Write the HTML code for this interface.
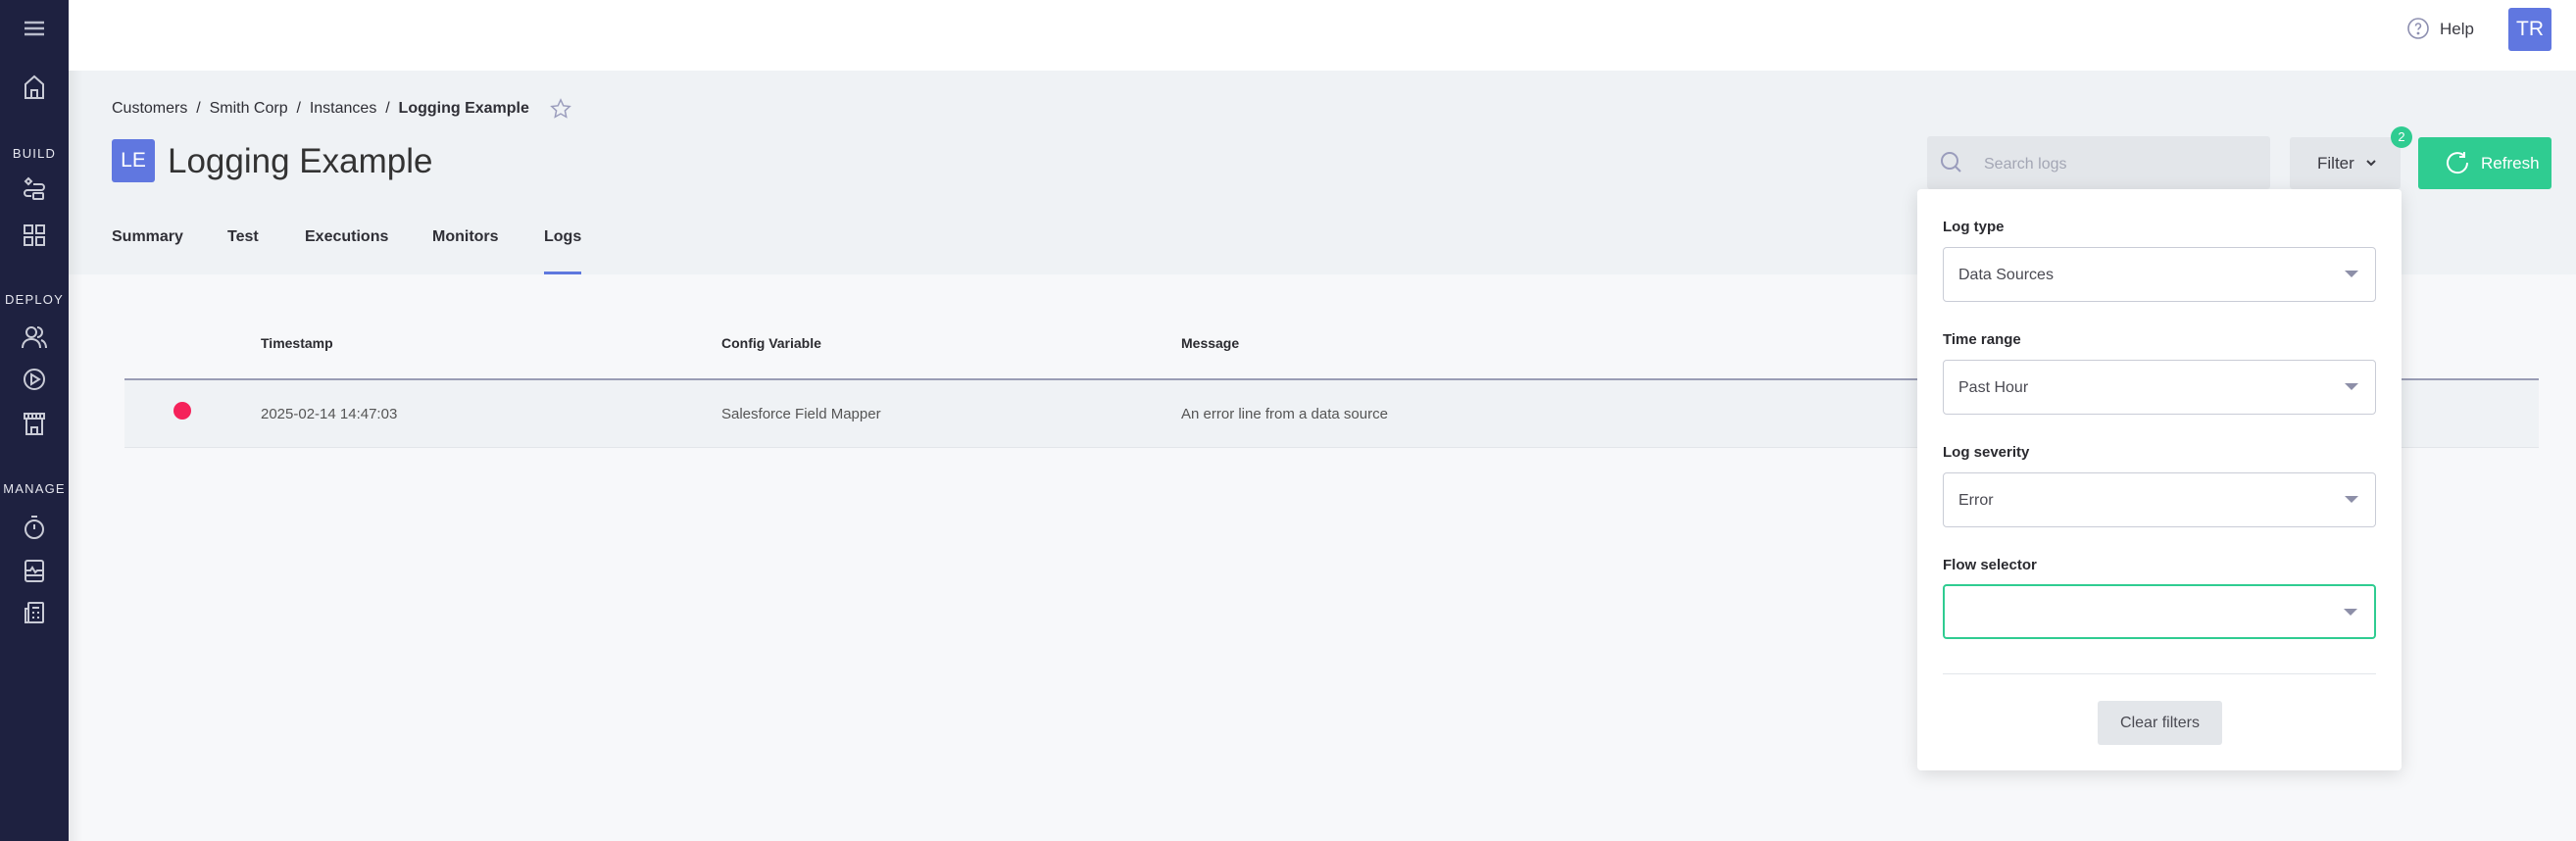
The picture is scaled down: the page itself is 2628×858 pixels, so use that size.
<!DOCTYPE html>
<html><head><meta charset="utf-8"><style>
*{box-sizing:border-box;margin:0;padding:0}
body{width:2628px;height:858px;overflow:hidden;font-family:"Liberation Sans",sans-serif;background:#f7f8fa;position:relative;color:#2f2f36}
.abs{position:absolute}
#side{left:0;top:0;width:70px;height:858px;background:#1e2140}
.sl{position:absolute;left:0;width:70px;text-align:center;color:#e6e7ef;font-size:13px;letter-spacing:1.2px}
.ic{position:absolute;left:20px;width:30px;height:30px}
#hdr{left:70px;top:0;width:2558px;height:72px;background:#fff}
#top{left:70px;top:72px;width:2558px;height:208px;background:#eff2f5}
.sh{left:70px;top:72px;width:14px;height:786px;background:linear-gradient(90deg,rgba(0,0,0,.06),rgba(0,0,0,0))}
.t{position:absolute;white-space:nowrap}
.sel{position:absolute;left:26px;width:442px;height:56px;border:1px solid #c9ccd6;border-radius:4px;font-size:16px;color:#4a4a52;padding:19px 15px}
.sel:after{content:"";position:absolute;right:17px;top:23px;border-left:7px solid transparent;border-right:7px solid transparent;border-top:7px solid #8d8fa8}
.lab{position:absolute;left:26px;font-size:15px;font-weight:bold;color:#2b2b30}
</style></head><body>
<div id="side" class="abs">
 <svg class="ic" style="top:14px" viewBox="0 0 30 30"><path d="M5 9h20M5 15h20M5 21h20" stroke="#b9bccb" stroke-width="2.4"/></svg>
 <svg class="ic" style="top:74px" viewBox="0 0 30 30" fill="none" stroke="#c9cbd6" stroke-width="2"><path d="M6 26V12l9-8 9 8v14zM12 26v-8h6v8"/></svg>
 <div class="sl" style="top:149px">BUILD</div>
 <svg class="ic" style="top:178px" viewBox="0 0 30 30" fill="none" stroke="#c9cbd6" stroke-width="2"><path d="M9 4l3 3-3 3-3-3zM14 10h8a3 3 0 010 6H8a3 3 0 000 6h4"/><rect x="14" y="19" width="10" height="6" rx="1"/></svg>
 <svg class="ic" style="top:225px" viewBox="0 0 30 30" fill="none" stroke="#c9cbd6" stroke-width="2"><rect x="5" y="5" width="8" height="8"/><rect x="17" y="5" width="8" height="8"/><rect x="5" y="17" width="8" height="8"/><rect x="17" y="17" width="8" height="8"/></svg>
 <div class="sl" style="top:298px">DEPLOY</div>
 <svg class="ic" style="top:329px" viewBox="0 0 30 30" fill="none" stroke="#c9cbd6" stroke-width="2"><circle cx="12" cy="10" r="5"/><path d="M3 26c0-6 4-9 9-9s9 3 9 9M18 5a5 5 0 010 10M22 18c3 1 5 4 5 8"/></svg>
 <svg class="ic" style="top:372px" viewBox="0 0 30 30" fill="none" stroke="#c9cbd6" stroke-width="2"><circle cx="15" cy="15" r="10"/><path d="M12 10v10l8-5z"/></svg>
 <svg class="ic" style="top:417px" viewBox="0 0 30 30" fill="none" stroke="#c9cbd6" stroke-width="2"><path d="M5 5h20v5H5zM7 10v16h16V10M12 26v-7h6v7M9 5v5M13 5v5M17 5v5M21 5v5"/></svg>
 <div class="sl" style="top:491px">MANAGE</div>
 <svg class="ic" style="top:523px" viewBox="0 0 30 30" fill="none" stroke="#c9cbd6" stroke-width="2"><circle cx="15" cy="17" r="9"/><path d="M12 4h6M15 12v5"/></svg>
 <svg class="ic" style="top:567px" viewBox="0 0 30 30" fill="none" stroke="#c9cbd6" stroke-width="2"><rect x="6" y="5" width="18" height="21" rx="2"/><path d="M6 15h5l2-3 3 5 2-2h6M6 20h18"/></svg>
 <svg class="ic" style="top:610px" viewBox="0 0 30 30" fill="none" stroke="#c9cbd6" stroke-width="2"><rect x="9" y="5" width="15" height="20" rx="1"/><path d="M9 11H6v14h3M13 10h7M13 15h2M18 15h2M13 20h2M18 20h2"/></svg>
</div>
<div id="hdr" class="abs"></div>
<svg class="abs" style="left:2455px;top:17px" width="24" height="24" viewBox="0 0 24 24" fill="none" stroke="#8d8fb0" stroke-width="1.6"><circle cx="12" cy="12" r="10"/><path d="M9.5 9.5a2.5 2.5 0 115 0c0 2-2.5 2-2.5 4"/><circle cx="12" cy="17" r=".6" fill="#8d8fb0"/></svg>
<div class="t" style="left:2489px;top:20px;font-size:17px;color:#3a3a42">Help</div>
<div class="abs" style="left:2559px;top:8px;width:44px;height:44px;background:#6077e0;border-radius:3px;color:#fff;font-size:21px;text-align:center;line-height:44px">TR</div>
<div id="top" class="abs"></div>
<div class="abs sh"></div>
<div class="t" style="left:114px;top:102px;font-size:16px;color:#2f2f36">Customers&nbsp;&nbsp;/&nbsp;&nbsp;Smith Corp&nbsp;&nbsp;/&nbsp;&nbsp;Instances&nbsp;&nbsp;/&nbsp;&nbsp;<b>Logging Example</b></div>
<svg class="abs" style="left:561px;top:100px" width="22" height="22" viewBox="0 0 24 24" fill="none" stroke="#9a9cbc" stroke-width="1.6"><path d="M12 2l3 6.5 7 .8-5.2 4.8 1.4 7-6.2-3.6-6.2 3.6 1.4-7L2 9.3l7-.8z"/></svg>
<div class="abs" style="left:114px;top:142px;width:44px;height:44px;background:#6077e0;border-radius:3px;color:#fff;font-size:21px;text-align:center;line-height:44px">LE</div>
<div class="t" style="left:171px;top:145px;font-size:35px;color:#333">Logging Example</div>
<div class="t" style="left:114px;top:233px;font-size:16px;font-weight:bold;color:#2f2f36">Summary</div>
<div class="t" style="left:232px;top:233px;font-size:16px;font-weight:bold;color:#2f2f36">Test</div>
<div class="t" style="left:311px;top:233px;font-size:16px;font-weight:bold;color:#2f2f36">Executions</div>
<div class="t" style="left:441px;top:233px;font-size:16px;font-weight:bold;color:#2f2f36">Monitors</div>
<div class="t" style="left:555px;top:233px;font-size:16px;font-weight:bold;color:#2f2f36">Logs</div>
<div class="abs" style="left:555px;top:277px;width:38px;height:3px;background:#5e78de"></div>

<div class="t" style="left:266px;top:342px;font-size:14px;font-weight:bold;color:#2b2b30">Timestamp</div>
<div class="t" style="left:736px;top:342px;font-size:14px;font-weight:bold;color:#2b2b30">Config Variable</div>
<div class="t" style="left:1205px;top:342px;font-size:14px;font-weight:bold;color:#2b2b30">Message</div>
<div class="abs" style="left:127px;top:386px;width:2463px;height:2px;background:#9a9db5"></div>
<div class="abs" style="left:127px;top:388px;width:2463px;height:69px;background:#eff2f5;border-bottom:1px solid #e2e5ea"></div>
<div class="abs" style="left:177px;top:410px;width:18px;height:18px;border-radius:50%;background:#f5225a"></div>
<div class="t" style="left:266px;top:414px;font-size:15px;color:#555">2025-02-14 14:47:03</div>
<div class="t" style="left:736px;top:414px;font-size:15px;color:#555">Salesforce Field Mapper</div>
<div class="t" style="left:1205px;top:414px;font-size:15px;color:#555">An error line from a data source</div>

<div class="abs" style="left:1966px;top:139px;width:350px;height:54px;background:#e3e6ea;border-radius:3px"></div>
<svg class="abs" style="left:1979px;top:154px" width="24" height="24" viewBox="0 0 24 24" fill="none" stroke="#9a9cbc" stroke-width="2"><circle cx="10" cy="10" r="8"/><path d="M16 16l5 5"/></svg>
<div class="t" style="left:2024px;top:159px;font-size:16px;color:#a3a6b4">Search logs</div>
<div class="abs" style="left:2336px;top:140px;width:113px;height:53px;background:#e3e6ea;border-radius:3px"></div>
<div class="t" style="left:2364px;top:157px;font-size:17px;color:#3a3a42">Filter</div>
<svg class="abs" style="left:2412px;top:159px" width="14" height="14" viewBox="0 0 14 14" fill="none" stroke="#3a3a42" stroke-width="2"><path d="M3 5l4 4 4-4"/></svg>
<div class="abs" style="left:2439px;top:129px;width:22px;height:22px;border-radius:50%;background:#2fcc91;color:#fff;font-size:13px;text-align:center;line-height:22px">2</div>
<div class="abs" style="left:2467px;top:140px;width:136px;height:53px;background:#2fcc91;border-radius:3px"></div>
<svg class="abs" style="left:2495px;top:154px" width="24" height="24" viewBox="0 0 24 24" fill="none" stroke="#fff" stroke-width="2"><path d="M19 5A10 10 0 1 0 22 12M19 1v5h-5"/></svg>
<div class="t" style="left:2531px;top:157px;font-size:17px;color:#fff">Refresh</div>

<div class="abs" style="left:1956px;top:193px;width:494px;height:593px;background:#fff;border-radius:4px;box-shadow:0 4px 18px rgba(0,0,0,.13)">
 <div class="lab" style="top:30px">Log type</div>
 <div class="sel" style="top:59px">Data Sources</div>
 <div class="lab" style="top:145px">Time range</div>
 <div class="sel" style="top:174px">Past Hour</div>
 <div class="lab" style="top:260px">Log severity</div>
 <div class="sel" style="top:289px">Error</div>
 <div class="lab" style="top:375px">Flow selector</div>
 <div class="sel" style="top:403px;border:2px solid #2fcc91"></div>
 <div class="abs" style="left:26px;top:494px;width:442px;height:1px;background:#e2e5ea"></div>
 <div class="abs" style="left:184px;top:522px;width:127px;height:45px;background:#e3e6ea;border-radius:3px;font-size:16px;color:#4a4a52;text-align:center;line-height:45px">Clear filters</div>
</div>
</body></html>
